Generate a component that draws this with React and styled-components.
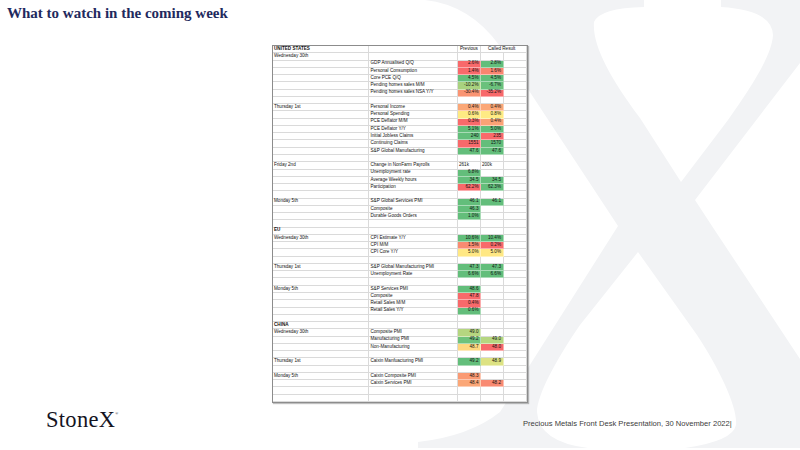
import React from "react";
import styled, { createGlobalStyle } from "styled-components";

const Global = createGlobalStyle`
  html, body { margin: 0; padding: 0; background: #fff; }
  * { box-sizing: border-box; }
`;

const R = "#f8696b";
const G = "#63be7b";
const Y = "#ffeb84";

const rows = [
  { a: "UNITED STATES", bold: true, header: true },
  { a: "Wednesday 30th" },
  { b: "GDP Annualised Q/Q", p: "2.6%", pc: R, c: "2.8%", cc: G },
  { b: "Personal Consumption", p: "1.4%", pc: R, c: "1.6%", cc: "#f98570" },
  { b: "Core PCE Q/Q", p: "4.5%", pc: G, c: "4.5%", cc: G },
  { b: "Pending homes sales M/M", p: "-10.2%", pc: "#a9d27f", c: "-6.7%", cc: "#6bc17c" },
  { b: "Pending homes sales NSA Y/Y", p: "-30.4%", pc: "#fa9473", c: "-35.2%", cc: R },
  {},
  { a: "Thursday 1st", b: "Personal Income", p: "0.4%", pc: "#fba777", c: "0.4%", cc: "#fba777" },
  { b: "Personal Spending", p: "0.6%", pc: "#feea83", c: "0.8%", cc: Y },
  { b: "PCE Deflator M/M", p: "0.3%", pc: R, c: "0.4%", cc: "#fba276" },
  { b: "PCE Deflator Y/Y", p: "5.1%", pc: G, c: "5.0%", cc: G },
  { b: "Initial Jobless Claims", p: "240", pc: G, c: "235", cc: R },
  { b: "Continuing Claims", p: "1551", pc: R, c: "1570", cc: G },
  { b: "S&P Global Manufacturing", p: "47.6", pc: G, c: "47.6", cc: G },
  {},
  { a: "Friday 2nd", b: "Change in NonFarm Payrolls", p: "261k", c: "200k", left: true },
  { b: "Unemployment rate", p: "6.8%", pc: G },
  { b: "Average Weekly hours", p: "34.5", pc: G, c: "34.5", cc: G },
  { b: "Participation", p: "62.2%", pc: R, c: "62.3%", cc: G },
  {},
  { a: "Monday 5th", b: "S&P Global Services PMI", p: "46.1", pc: G, c: "46.1", cc: G },
  { b: "Composite", p: "46.3", pc: G },
  { b: "Durable Goods Orders", p: "1.0%", pc: G },
  {},
  { a: "EU", bold: true },
  { a: "Wednesday 30th", b: "CPI Estimate Y/Y", p: "10.6%", pc: G, c: "10.4%", cc: G },
  { b: "CPI M/M", p: "1.5%", pc: "#f98b72", c: "0.2%", cc: R },
  { b: "CPI Core Y/Y", p: "5.0%", pc: "#ffe884", c: "5.0%", cc: "#ffe884" },
  {},
  { a: "Thursday 1st", b: "S&P Global Manufacturing PMI", p: "47.3", pc: G, c: "47.3", cc: G },
  { b: "Unemployment Rate", p: "6.6%", pc: G, c: "6.6%", cc: G },
  {},
  { a: "Monday 5th", b: "S&P Services PMI", p: "48.6", pc: G },
  { b: "Composite", p: "47.8", pc: R },
  { b: "Retail Sales M/M", p: "0.4%", pc: R },
  { b: "Retail Sales Y/Y", p: "0.6%", pc: G },
  {},
  { a: "CHINA", bold: true },
  { a: "Wednesday 30th", b: "Composite PMI", p: "49.0", pc: "#b5d680" },
  { b: "Manufacturing PMI", p: "49.2", pc: "#6fc27c", c: "49.0", cc: "#b5d680" },
  { b: "Non-Manufacturing", p: "48.7", pc: "#fed880", c: "48.0", cc: R },
  {},
  { a: "Thursday 1st", b: "Caixin Manfuacturing PMI", p: "49.2", pc: G, c: "48.9", cc: "#dde283" },
  {},
  { a: "Monday 5th", b: "Caixin Composite PMI", p: "48.3", pc: "#fa9a74" },
  { b: "Caixin Services PMI", p: "48.4", pc: "#fba777", c: "48.2", cc: "#f98a72" },
  {},
  {},
];

const Slide = styled.div`
  position: relative;
  width: 800px;
  height: 450px;
  overflow: hidden;
  background: #fff;
  display: flex;
  flex-direction: column;
`;

const Watermark = styled.svg`
  position: absolute;
  left: 0;
  top: 0;
  width: 800px;
  height: 450px;
`;

const Content = styled.div`
  position: relative;
  display: flex;
  flex-direction: column;
  height: 100%;
`;

const TitleBar = styled.div`
  height: 45px;
  padding: 4px 0 0 7px;
`;

const Title = styled.h1`
  margin: 0;
  font-family: "Liberation Serif", "Times New Roman", serif;
  font-weight: 700;
  font-size: 15px;
  line-height: 18px;
  color: #1f2a5e;
`;

const Sheet = styled.div`
  align-self: center;
  width: 256px;
  height: 358px;
  border: 1px solid #8c8c8c;
  box-shadow: 1px 1px 1px rgba(0, 0, 0, 0.25);
  background: #fff;
  display: grid;
  grid-template-columns: 96px 89px 23px 22.5px 23.5px;
  grid-template-rows: repeat(49, 1fr);
  font-family: "Liberation Sans", Arial, sans-serif;
  font-size: 4.6px;
  color: #111;
`;

const Cell = styled.div`
  border-right: 1px solid ${(p) => (p.$bg ? "rgba(255,255,255,0.45)" : "#dadada")};
  border-bottom: 1px solid ${(p) => (p.$bg ? "rgba(255,255,255,0.45)" : "#dadada")};
  background: ${(p) => p.$bg || "transparent"};
  white-space: nowrap;
  overflow: visible;
  display: flex;
  align-items: center;
  justify-content: ${(p) => (p.$right ? "flex-end" : "flex-start")};
  padding: 0 ${(p) => (p.$right ? "1.5px" : "0")} 0 ${(p) => p.$pad || "1px"};
  font-weight: ${(p) => (p.$bold ? 700 : 400)};
  grid-column: ${(p) => (p.$span ? `span ${p.$span}` : "auto")};
  line-height: 1;
`;

const Footer = styled.div`
  flex: 1;
  display: flex;
  align-items: baseline;
  padding: 0 0 0 46px;
`;

const Logo = styled.div`
  flex: 0 0 477px;
  font-family: "Liberation Serif", "Times New Roman", serif;
  font-size: 22.5px;
  line-height: 22px;
  color: #14141f;
  letter-spacing: 0.3px;
`;

const Reg = styled.sup`
  font-size: 4px;
  vertical-align: 12px;
  margin-left: 0;
`;

const FootText = styled.div`
  font-family: "Liberation Sans", Arial, sans-serif;
  font-size: 7.6px;
  color: #3c3c3c;
  white-space: nowrap;
  position: relative;
  top: -1px;
`;

function XMark() {
  return (
    <Watermark viewBox="0 0 800 450">
      <path
        fill="#f2f3f5"
        d="M425,0 L644,0 L644,7 Q600,8 594,22 C592,45 610,78 640,118 L681,182 L728,120 C752,86 772,55 773,35 Q772,10 721,7 L721,0 L800,0 L800,63 L695,200 L710,223 L800,359 L800,448 L685,448 Q733,441 736,425 C738,408 720,370 697,335 L638,252 L580,325 C556,360 537,395 537,412 Q539,442 588,448 L418,448 L418,442 Q470,436 500,412 L618,226 L499,45 Q470,5 425,0 Z"
      />
    </Watermark>
  );
}

export default function App() {
  return (
    <>
      <Global />
      <Slide>
        <XMark />
        <Content>
          <TitleBar>
            <Title>What to watch in the coming week</Title>
          </TitleBar>
          <Sheet>
            {rows.map((r, i) =>
              r.header ? (
                <React.Fragment key={i}>
                  <Cell $bold>{r.a}</Cell>
                  <Cell />
                  <Cell $pad="2px">Previous</Cell>
                  <Cell $span={2} $pad="7px">Called Result</Cell>
                </React.Fragment>
              ) : (
                <React.Fragment key={i}>
                  <Cell $bold={r.bold}>{r.a}</Cell>
                  <Cell $pad="1.5px">{r.b}</Cell>
                  <Cell $bg={r.pc} $right={!r.left}>{r.p}</Cell>
                  <Cell $bg={r.cc} $right={!r.left}>{r.c}</Cell>
                  <Cell />
                </React.Fragment>
              )
            )}
          </Sheet>
          <Footer>
            <Logo>
              StoneX<Reg>®</Reg>
            </Logo>
            <FootText>Precious Metals Front Desk Presentation, 30 November 2022|</FootText>
          </Footer>
        </Content>
      </Slide>
    </>
  );
}
